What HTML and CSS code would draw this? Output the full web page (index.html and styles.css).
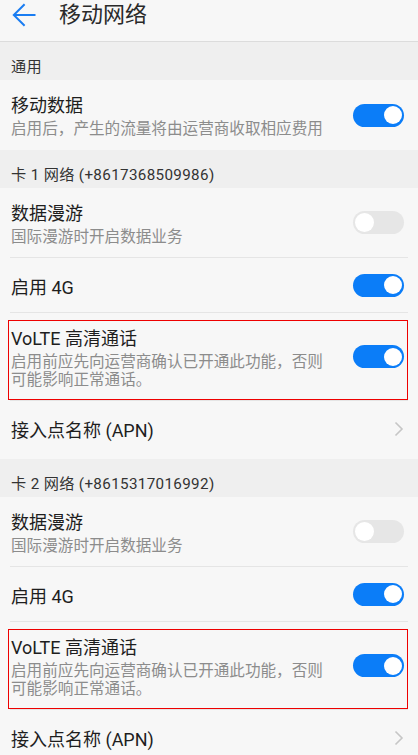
FILE: index.html
```html
<!DOCTYPE html>
<html lang="zh-CN">
<head>
<meta charset="utf-8">
<title>移动网络</title>
<link rel="stylesheet" href="styles.css">
</head>
<body>
<div class="screen">
  <header class="appbar">
    <svg class="back" width="24" height="24" viewBox="0 0 24 24" aria-hidden="true">
      <path d="M1.8 12 H23.5 M12.6 1.2 L1.8 12 L12.6 22.8" fill="none" stroke="#1a7df2" stroke-width="2" stroke-linecap="butt" stroke-linejoin="miter"/>
    </svg>
    <h1 class="title">移动网络</h1>
  </header>

  <div class="section">通用</div>
  <div class="row two last">
    <div class="text">
      <div class="label">移动数据</div>
      <div class="sub">启用后，产生的流量将由运营商收取相应费用</div>
    </div>
    <span class="toggle on"><span class="knob"></span></span>
  </div>

  <div class="section">卡 1 网络 (+8617368509986)</div>
  <div class="row two">
    <div class="text">
      <div class="label">数据漫游</div>
      <div class="sub">国际漫游时开启数据业务</div>
    </div>
    <span class="toggle off"><span class="knob"></span></span>
  </div>
  <div class="row one">
    <div class="text"><div class="label">启用 4G</div></div>
    <span class="toggle on"><span class="knob"></span></span>
  </div>
  <div class="row two marked">
    <div class="text">
      <div class="label">VoLTE 高清通话</div>
      <div class="sub">启用前应先向运营商确认已开通此功能，否则可能影响正常通话。</div>
    </div>
    <span class="toggle on"><span class="knob"></span></span>
  </div>
  <div class="row one last">
    <div class="text"><div class="label">接入点名称 (APN)</div></div>
    <svg class="chev" width="10" height="16" viewBox="0 0 10 16" aria-hidden="true">
      <path d="M1.5 1.5 L8 8 L1.5 14.5" fill="none" stroke="#c6c6c6" stroke-width="1.6"/>
    </svg>
  </div>

  <div class="section">卡 2 网络 (+8615317016992)</div>
  <div class="row two">
    <div class="text">
      <div class="label">数据漫游</div>
      <div class="sub">国际漫游时开启数据业务</div>
    </div>
    <span class="toggle off"><span class="knob"></span></span>
  </div>
  <div class="row one">
    <div class="text"><div class="label">启用 4G</div></div>
    <span class="toggle on"><span class="knob"></span></span>
  </div>
  <div class="row two marked">
    <div class="text">
      <div class="label">VoLTE 高清通话</div>
      <div class="sub">启用前应先向运营商确认已开通此功能，否则可能影响正常通话。</div>
    </div>
    <span class="toggle on"><span class="knob"></span></span>
  </div>
  <div class="row one last">
    <div class="text"><div class="label">接入点名称 (APN)</div></div>
    <svg class="chev" width="10" height="16" viewBox="0 0 10 16" aria-hidden="true">
      <path d="M1.5 1.5 L8 8 L1.5 14.5" fill="none" stroke="#c6c6c6" stroke-width="1.6"/>
    </svg>
  </div>
</div>
</body>
</html>
```
FILE: styles.css
```css
html, body {
  margin: 0;
  padding: 0;
  background: #f7f7f7;
}
body {
  font-family: Roboto, "Noto Sans CJK SC", sans-serif;
  color: #1e1e1e;
  overflow: hidden;
}
.screen {
  width: 418px;
  display: flex;
  flex-direction: column;
}
.appbar {
  height: 30px;
  padding: 0 0 11px 12px;
  display: flex;
  align-items: center;
  gap: 23px;
  border-bottom: 1px solid #dcdcdc;
  background: #f7f7f7;
}
.back {
  flex: none;
  margin-top: -1px;
}
.title {
  margin: 0;
  font-size: 22px;
  line-height: 30px;
  font-weight: 400;
  color: #2a2a2a;
}
.section {
  height: 38px;
  box-sizing: border-box;
  padding: 15px 0 0 11px;
  font-size: 15.2px;
  line-height: 20px;
  letter-spacing: 0.35px;
  color: #333333;
  background: #efefef;
}
.row {
  margin: 0 10px;
  padding: 0 4px 0 1px;
  display: flex;
  align-items: center;
  justify-content: space-between;
  border-bottom: 1px solid #e5e5e5;
  position: relative;
}
.row.last {
  border-bottom: none;
}
.row.two .text {
  padding: 14px 0 11px;
}
.row.two.last .text {
  padding: 14px 0 12px;
}
.row.one .text {
  padding: 18px 0 12px;
}
.row.one.last .text {
  padding: 18px 0 16px;
}
.text {
  max-width: 318px;
}
.label {
  font-size: 18px;
  line-height: 24px;
  color: #1e1e1e;
}
.sub {
  margin-top: 2px;
  font-size: 15.6px;
  line-height: 18px;
  color: #8c8c8c;
}
.toggle {
  flex: none;
  width: 51px;
  height: 23px;
  box-sizing: border-box;
  border-radius: 12px;
  display: flex;
  align-items: center;
  padding: 0 2px;
}
.toggle.on {
  background: #0b7df8;
  justify-content: flex-end;
}
.toggle.off {
  background: #e6e6e6;
  justify-content: flex-start;
}
.knob {
  width: 18px;
  height: 18px;
  border-radius: 50%;
  background: #ffffff;
}
.toggle.off .knob {
  width: 19px;
  height: 19px;
}
.chev {
  flex: none;
  margin-top: -2px;
}
.marked::after {
  content: "";
  position: absolute;
  left: -2px;
  right: 0;
  top: 7px;
  bottom: 0;
  border: 1px solid #ee0000;
  pointer-events: none;
}
```
